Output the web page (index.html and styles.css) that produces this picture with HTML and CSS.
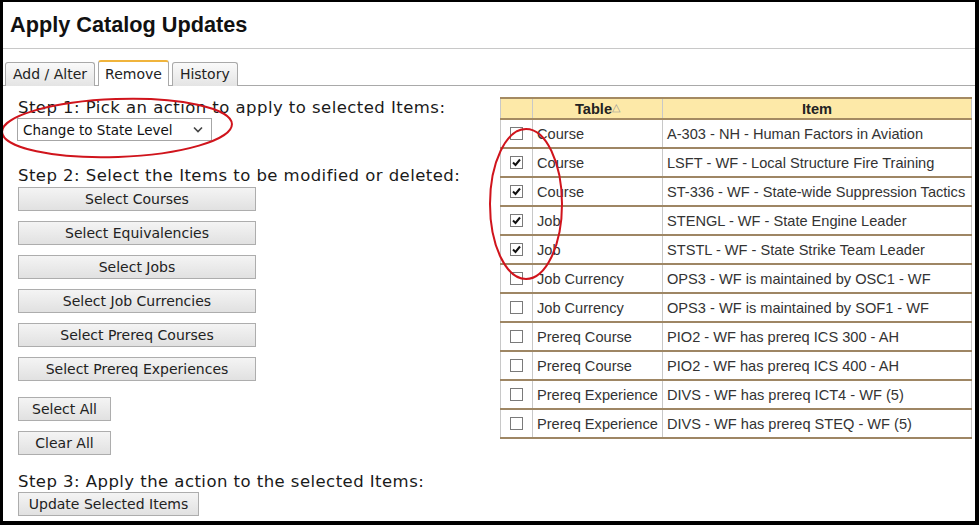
FILE: index.html
```html
<!DOCTYPE html>
<html lang="en">
<head>
    <meta charset="UTF-8">
    <title>Apply Catalog Updates</title>
    <link rel="stylesheet" href="styles.css">
</head>
<body>
<div class="frame">
    <h1 class="page-title">Apply Catalog Updates</h1>

    <div class="tabs">
        <div class="tab">Add / Alter</div>
        <div class="tab active">Remove</div>
        <div class="tab">History</div>
    </div>

    <div class="panel">
        <div class="steps">
            <div class="step-label">Step 1: Pick an action to apply to selected Items:</div>
            <div class="select-box">
                <span>Change to State Level</span>
                <svg width="10" height="7" viewBox="0 0 10 7"><path d="M1 1.5 L5 5.5 L9 1.5" fill="none" stroke="#444" stroke-width="1.6"/></svg>
            </div>

            <div class="step-label step-two">Step 2: Select the Items to be modified or deleted:</div>
            <div class="btn-list">
                <button class="btn wide">Select Courses</button>
                <button class="btn wide">Select Equivalencies</button>
                <button class="btn wide">Select Jobs</button>
                <button class="btn wide">Select Job Currencies</button>
                <button class="btn wide">Select Prereq Courses</button>
                <button class="btn wide">Select Prereq Experiences</button>
            </div>
            <div class="btn-list all-btns">
                <button class="btn small">Select All</button>
                <button class="btn small">Clear All</button>
            </div>

            <div class="step-label step-three">Step 3: Apply the action to the selected Items:</div>
            <button class="btn update">Update Selected Items</button>
        </div>

        <table class="items">
            <tr>
                <th class="chk-col"></th>
                <th class="table-col">Table<span class="sort">&#9651;</span></th>
                <th>Item</th>
            </tr>
            <tr><td><span class="box"></span></td><td>Course</td><td>A-303 - NH - Human Factors in Aviation</td></tr>
            <tr><td><span class="box checked"><svg width="11" height="11" viewBox="0 0 11 11"><path d="M2 5.5 L4.5 8 L9 2.5" fill="none" stroke="#111" stroke-width="2"/></svg></span></td><td>Course</td><td>LSFT - WF - Local Structure Fire Training</td></tr>
            <tr><td><span class="box checked"><svg width="11" height="11" viewBox="0 0 11 11"><path d="M2 5.5 L4.5 8 L9 2.5" fill="none" stroke="#111" stroke-width="2"/></svg></span></td><td>Course</td><td>ST-336 - WF - State-wide Suppression Tactics</td></tr>
            <tr><td><span class="box checked"><svg width="11" height="11" viewBox="0 0 11 11"><path d="M2 5.5 L4.5 8 L9 2.5" fill="none" stroke="#111" stroke-width="2"/></svg></span></td><td>Job</td><td>STENGL - WF - State Engine Leader</td></tr>
            <tr><td><span class="box checked"><svg width="11" height="11" viewBox="0 0 11 11"><path d="M2 5.5 L4.5 8 L9 2.5" fill="none" stroke="#111" stroke-width="2"/></svg></span></td><td>Job</td><td>STSTL - WF - State Strike Team Leader</td></tr>
            <tr><td><span class="box"></span></td><td>Job Currency</td><td>OPS3 - WF is maintained by OSC1 - WF</td></tr>
            <tr><td><span class="box"></span></td><td>Job Currency</td><td>OPS3 - WF is maintained by SOF1 - WF</td></tr>
            <tr><td><span class="box"></span></td><td>Prereq Course</td><td>PIO2 - WF has prereq ICS 300 - AH</td></tr>
            <tr><td><span class="box"></span></td><td>Prereq Course</td><td>PIO2 - WF has prereq ICS 400 - AH</td></tr>
            <tr><td><span class="box"></span></td><td>Prereq Experience</td><td>DIVS - WF has prereq ICT4 - WF (5)</td></tr>
            <tr><td><span class="box"></span></td><td>Prereq Experience</td><td>DIVS - WF has prereq STEQ - WF (5)</td></tr>
        </table>
    </div>

    <!-- hand-drawn highlight marks over the form -->
    <svg class="marks" width="979" height="525" viewBox="0 0 979 525">
        <ellipse cx="117" cy="128" rx="115" ry="29" transform="rotate(-2 117 128)" fill="none" stroke="#d0141c" stroke-width="2"/>
        <ellipse cx="526" cy="204" rx="36" ry="75" fill="none" stroke="#d0141c" stroke-width="2"/>
    </svg>
</div>
</body>
</html>
```

FILE: styles.css
```css
html, body {
    margin: 0;
    padding: 0;
    background: #fff;
}
.frame {
    position: relative;
    width: 979px;
    height: 525px;
    box-sizing: border-box;
    border-style: solid;
    border-color: #000;
    border-width: 2px 4px 4px 3px;
    background: #fff;
    overflow: hidden;
}
.page-title {
    margin: 0;
    padding: 10px 0 0 7px;
    height: 36px;
    font-family: "Liberation Sans", Arial, sans-serif;
    font-size: 21.7px;
    font-weight: bold;
    color: #111;
    border-bottom: 1px solid #c8c8c8;
}
.tabs {
    display: flex;
    gap: 3px;
    padding: 13px 0 0 2px;
    border-bottom: 1px solid #a9a9a9;
    height: 23px;
    box-sizing: content-box;
}
.tab {
    font-family: "DejaVu Sans", Verdana, sans-serif;
    font-size: 14px;
    color: #222;
    padding: 3px 7px 0 7px;
    border: 1px solid #a9a9a9;
    border-bottom: none;
    border-radius: 3px 3px 0 0;
    background: linear-gradient(#fafafa, #e4e4e4);
    height: 20px;
    box-sizing: content-box;
}
.tab.active {
    background: #fff;
    border-top: 2px solid #f0b43c;
    padding: 4px 6px 0 6px;
    margin-top: -2px;
    margin-bottom: -1px;
    height: 20px;
}
.panel {
    display: flex;
    padding: 11px 0 0 15px;
}
.steps {
    width: 482px;
    flex-shrink: 0;
    padding-top: 2px;
}
.step-label {
    font-family: "DejaVu Sans", Verdana, sans-serif;
    font-size: 16.5px;
    letter-spacing: 0.45px;
    line-height: 18px;
    color: #1a1a1a;
    white-space: nowrap;
}
.select-box {
    display: flex;
    align-items: center;
    justify-content: space-between;
    height: 21px;
    margin-top: 1px;
    margin-left: -1px;
    padding: 0 8px 0 5px;
    box-sizing: content-box;
    width: 180px;
    border: 1px solid #a6a6a6;
    font-family: "DejaVu Sans", Verdana, sans-serif;
    font-size: 13.5px;
    color: #111;
}
.step-two {
    margin-top: 26px;
}
.btn-list {
    display: flex;
    flex-direction: column;
    align-items: flex-start;
    gap: 10px;
    margin-top: 2px;
}
.all-btns {
    margin-top: 16px;
}
.btn {
    display: block;
    height: 24px;
    padding: 0;
    font-family: "DejaVu Sans", Tahoma, sans-serif;
    font-size: 14px;
    color: #222;
    background: linear-gradient(#f4f4f4, #e1e1e1);
    border: 1px solid #adadad;
    border-radius: 0;
}
.btn.wide {
    width: 238px;
}
.btn.small {
    width: 93px;
}
.step-three {
    margin-top: 18px;
}
.btn.update {
    width: 181px;
    margin-top: 1px;
}
.items {
    border-collapse: collapse;
    width: 472px;
    font-family: "Liberation Sans", Arial, sans-serif;
    font-size: 14.6px;
    color: #333;
    border-left: 1px solid #c8c8c8;
    border-right: 1px solid #c8c8c8;
    align-self: flex-start;
}
.items th {
    background: #fde9a8;
    height: 19px;
    padding: 0;
    font-weight: bold;
    color: #222;
    border-top: 2px solid #a48a62;
    border-bottom: 2px solid #a48a62;
    border-left: 1px solid #c8c8c8;
    border-right: 1px solid #c8c8c8;
}
.items td {
    height: 27px;
    padding: 0 0 0 4px;
    border-bottom: 2px solid #9e8664;
    border-left: 1px solid #c8c8c8;
    border-right: 1px solid #c8c8c8;
    white-space: nowrap;
}
.chk-col {
    width: 31px;
}
.table-col {
    width: 129px;
}
.sort {
    font-size: 11px;
    color: #999;
    font-weight: normal;
    vertical-align: 3px;
}
.box {
    display: block;
    width: 13px;
    height: 13px;
    margin-left: 5px;
    box-sizing: border-box;
    border: 1px solid #7a7a7a;
    background: #fff;
    position: relative;
}
.box svg {
    position: absolute;
    left: 0;
    top: 0;
}
.marks {
    position: absolute;
    left: -3px;
    top: -2px;
    pointer-events: none;
}
```
